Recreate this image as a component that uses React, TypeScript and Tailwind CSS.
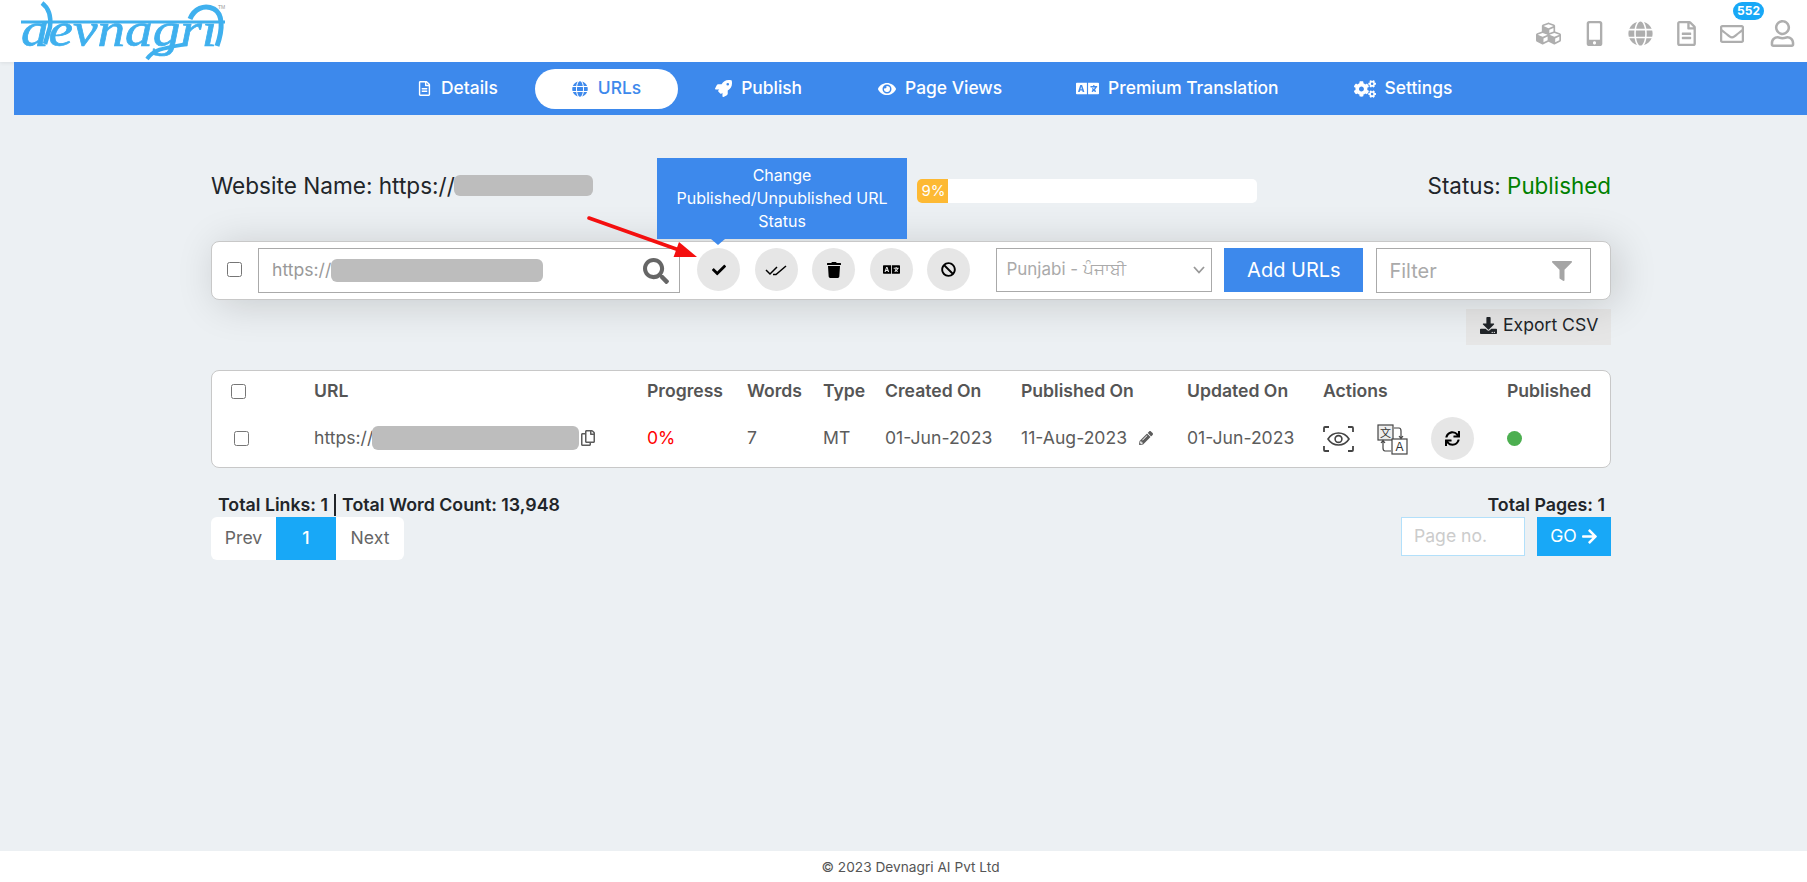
import {
  FaArrowRight,
  FaBan,
  FaCheck,
  FaCogs,
  FaCubes,
  FaDownload,
  FaEye,
  FaFilter,
  FaGlobe,
  FaLanguage,
  FaMobileAlt,
  FaPencilAlt,
  FaRegCopy,
  FaRegEnvelope,
  FaRegFileAlt,
  FaRegUser,
  FaRocket,
  FaSearch,
  FaSync,
  FaTrash,
} from 'react-icons/fa';
import type { ReactNode } from 'react';

const font = { fontFamily: 'Inter, "Noto Sans", sans-serif' };

function Logo() {
  return (
    <svg width="232" height="60" viewBox="0 0 232 60" className="ml-[18px] shrink-0">
      <clipPath id="below-line">
        <rect x="0" y="21" width="232" height="39" />
      </clipPath>
      <text
        x="3"
        y="45"
        fill="#3fb0ee"
        stroke="#3fb0ee"
        strokeWidth="0.7"
        clipPath="url(#below-line)"
        fontFamily="Liberation Serif"
        fontStyle="italic"
        fontSize="48"
        textLength="196"
        lengthAdjust="spacingAndGlyphs"
      >
        devnagri
      </text>
      <path d="M3 21 H207" stroke="#3fb0ee" strokeWidth="3" fill="none" />
      <path d="M24 2 C32 8 33 18 32 26 L27 43" stroke="#3fb0ee" strokeWidth="4.5" fill="none" />
      <path d="M129 58 C136 48 146 47 169 43" stroke="#3fb0ee" strokeWidth="4" fill="none" />
      <path d="M172 18 C176 8 186 3 196 8 C205 13 205 28 199 45" stroke="#3fb0ee" strokeWidth="5" fill="none" />
      <text x="200" y="8" fill="#999" fontSize="5" fontFamily="Liberation Sans">TM</text>
    </svg>
  );
}

function TopIcon({ children, className }: { children: ReactNode; className: string }) {
  return <div className={`flex w-[46px] justify-center text-[#aeaeae] ${className}`}>{children}</div>;
}

function NavItem({ icon, label, active, className }: { icon: ReactNode; label: string; active?: boolean; className?: string }) {
  return (
    <div
      className={
        active
          ? 'flex h-10 items-center gap-[10px] rounded-[20px] bg-white px-[37px] text-[#3d89ec]'
          : `flex h-10 items-center gap-[9px] px-[37px] text-white ${className ?? ''}`
      }
    >
      {icon}
      <span className="text-[17.4px] font-medium">{label}</span>
    </div>
  );
}

function RoundBtn({ children, className }: { children: ReactNode; className?: string }) {
  return (
    <div className={`flex h-[43px] w-[43px] shrink-0 items-center justify-center rounded-full bg-[#e6e6e6] text-black ${className ?? ''}`}>
      {children}
    </div>
  );
}

function Blob({ className }: { className: string }) {
  return <span className={`block rounded-[6px] bg-[#bdbdbd] ${className}`} />;
}

function DoubleCheck() {
  return (
    <svg width="22" height="12" viewBox="0 0 22 12" fill="none" stroke="black" strokeWidth="1.5">
      <path d="M1 6 L5 10 L12 3" />
      <path d="M8 10.5 L11 10.5 L21 2" />
    </svg>
  );
}

function ScanEye() {
  return (
    <svg width="31" height="26" viewBox="0 0 31 26" fill="none" stroke="#444" strokeWidth="1.6">
      <path d="M1 6 V2 Q1 1 2 1 H6 M25 1 H29 Q30 1 30 2 V6 M30 20 V24 Q30 25 29 25 H25 M6 25 H2 Q1 25 1 24 V20" strokeWidth="1.8" />
      <path d="M5 13 C10 5 21 5 26 13 C21 21 10 21 5 13 Z" />
      <circle cx="15.5" cy="13" r="3.4" />
    </svg>
  );
}

function TranslateIcon() {
  return (
    <svg width="31" height="31" viewBox="0 0 31 31" fill="none" stroke="#444" strokeWidth="1.2">
      <rect x="1" y="1" width="15" height="15" fill="#eee" />
      <text x="8.5" y="13" textAnchor="middle" fontSize="11" fill="#333" stroke="none" fontFamily='"Noto Sans CJK SC", sans-serif'>文</text>
      <rect x="15" y="15" width="15" height="15" fill="#fff" />
      <text x="22.5" y="27" textAnchor="middle" fontSize="12" fill="#333" stroke="none" fontFamily="Liberation Sans">A</text>
      <path d="M17 4 H22 Q24 4 24 7 V14 M22 12 L24 14.5 L26 12" />
      <path d="M14 27 H8 Q6 27 6 24 V17 M4 19 L6 16.5 L8 19" />
    </svg>
  );
}

export default function App() {
  return (
    <div className="flex min-h-[882px] flex-col bg-[#ecf0f3] text-[#212529]" style={font}>
      <header className="relative flex h-[62px] items-center justify-between bg-white shadow-[0_1px_4px_rgba(0,0,0,0.08)]">
        <Logo />
        <div className="relative mr-[2px] flex items-center pt-[5px]">
          <TopIcon className="text-[25px]"><FaCubes /></TopIcon>
          <TopIcon className="text-[25px]"><FaMobileAlt /></TopIcon>
          <TopIcon className="text-[25px]"><FaGlobe /></TopIcon>
          <TopIcon className="text-[25px]"><FaRegFileAlt /></TopIcon>
          <TopIcon className="text-[24px]"><FaRegEnvelope /></TopIcon>
          <TopIcon className="ml-[4px] text-[27px]"><FaRegUser /></TopIcon>
          <span className="absolute left-[208px] top-[-13px] flex h-[18px] w-[31px] items-center justify-center rounded-full bg-[#18a8f7] text-[12px] font-bold text-white">
            552
          </span>
        </div>
      </header>

      <nav className="relative ml-[14px] flex h-[53px] items-center bg-[#3d89ec] pl-[366px]">
        <NavItem icon={<FaRegFileAlt className="text-[15px]" />} label="Details" />
        <NavItem active icon={<FaGlobe className="text-[16px]" />} label="URLs" />
        <NavItem icon={<FaRocket className="text-[17px]" />} label="Publish" />
        <NavItem className="ml-[2px]" icon={<FaEye className="text-[18px]" />} label="Page Views" />
        <NavItem icon={<FaLanguage className="text-[23px]" />} label="Premium Translation" />
        <NavItem className="ml-[1px]" icon={<FaCogs className="text-[22px]" />} label="Settings" />
      </nav>

      <main className="ml-[211px] w-[1400px]">
        <div className="mt-[47px] flex h-[48px] items-center">
          <div className="flex w-[706px] items-center text-[22.6px]">
            <span>Website Name: https://</span>
            <Blob className="ml-[-1px] h-[21px] w-[139px]" />
          </div>
          <div className="mt-[10px] h-6 w-[340px] overflow-hidden rounded-[5px] bg-white">
            <div className="flex h-full w-[31px] items-center justify-center bg-[#fdb933] pl-[2px] text-[15px] text-white">9%</div>
          </div>
          <div className="ml-auto text-[22.4px]">
            Status: <span className="text-[#008000]">Published</span>
          </div>
        </div>

        <div className="relative mt-[31px] flex h-[59px] items-start rounded-[8px] border border-[#c8c8c8] bg-white pt-[6px] shadow-[6px_4px_40px_rgba(0,0,0,0.16)]">
          <div className="absolute left-[445px] top-[-84px] flex h-[81px] w-[250px] flex-col items-center justify-center bg-[#3d89ec] text-center text-[16px] leading-[23px] text-white">
            <span>Change</span>
            <span>Published/Unpublished URL</span>
            <span>Status</span>
            <span className="absolute left-[54px] top-[81px] h-0 w-0 border-x-[7px] border-t-[6px] border-x-transparent border-t-[#3d89ec]" />
          </div>
          <svg width="125" height="55" viewBox="0 0 125 55" className="absolute left-[375px] top-[-33px] z-10">
            <path d="M2 9 L92 41" stroke="#f40f0f" strokeWidth="3.6" strokeLinecap="round" />
            <path d="M110 48 L86.6 48 L92 33 Z" fill="#f40f0f" />
          </svg>

          <input type="checkbox" className="ml-[15px] mt-[14px] h-[15px] w-[15px]" readOnly />
          <div className="ml-[16px] flex h-[45px] w-[422px] items-center border border-[#aaa] pl-[13px] text-[17.6px] text-[#999]">
            <span>https://</span>
            <Blob className="h-[23px] w-[212px]" />
            <FaSearch className="ml-auto mr-[10px] text-[26px] text-[#666]" />
          </div>
          <RoundBtn className="ml-[17px]"><FaCheck className="text-[14px]" /></RoundBtn>
          <RoundBtn className="ml-[14.6px]"><DoubleCheck /></RoundBtn>
          <RoundBtn className="ml-[14.6px]"><FaTrash className="text-[16px]" /></RoundBtn>
          <RoundBtn className="ml-[14.6px]"><FaLanguage className="text-[17px]" /></RoundBtn>
          <RoundBtn className="ml-[14.6px]"><FaBan className="text-[15px]" /></RoundBtn>
          <div className="relative ml-[26px]">
            <select className="block h-[44px] w-[216px] appearance-none border border-[#aaa] bg-white pl-[9px] text-[17px] text-[#aaa]">
              <option>Punjabi - ਪੰਜਾਬੀ</option>
            </select>
            <svg width="12" height="8" viewBox="0 0 12 8" fill="none" stroke="#999" strokeWidth="1.8" className="absolute right-[7px] top-[18px]">
              <path d="M1 1 L6 6.5 L11 1" />
            </svg>
          </div>
          <div className="ml-[12px] flex h-[44px] w-[139px] items-center justify-center bg-[#3d89ec] text-[20px] text-white">
            Add URLs
          </div>
          <div className="ml-[13px] flex h-[45px] w-[215px] items-center justify-between border border-[#aaa] pl-[12px] pr-[18px] text-[20px] text-[#aaa]">
            <span>Filter</span>
            <FaFilter className="text-[20px] text-[#a5a5a5]" />
          </div>
        </div>

        <div className="mt-[9px] flex justify-end">
          <div className="flex h-[36px] w-[145px] items-center gap-[6px] bg-[#e6e6e6] pb-[3px] pl-[14px] text-[17.6px]">
            <FaDownload className="text-[17px]" />
            <span>Export CSV</span>
          </div>
        </div>

        <div className="mt-[25px] h-[98px] rounded-[8px] border border-[#c8c8c8] bg-white text-[17.6px] text-[#5c5c5c]">
          <div className="grid h-[39px] grid-cols-[102px_333px_100px_76px_62px_136px_166px_136px_184px_1fr] items-center pt-[2px] font-semibold text-[#555]">
            <span className="pl-[19px]"><input type="checkbox" className="block h-[15px] w-[15px]" readOnly /></span>
            <span>URL</span>
            <span>Progress</span>
            <span>Words</span>
            <span>Type</span>
            <span>Created On</span>
            <span>Published On</span>
            <span>Updated On</span>
            <span>Actions</span>
            <span>Published</span>
          </div>
          <div className="grid h-[57px] grid-cols-[102px_333px_100px_76px_62px_136px_166px_136px_184px_1fr] items-center">
            <span className="pl-[22px]"><input type="checkbox" className="block h-[15px] w-[15px]" readOnly /></span>
            <span className="flex items-center">
              https://
              <Blob className="ml-[-1px] h-[24px] w-[207px]" />
              <FaRegCopy className="ml-[1px] text-[16px]" />
            </span>
            <span className="text-[#f00]">0%</span>
            <span>7</span>
            <span>MT</span>
            <span>01-Jun-2023</span>
            <span className="flex items-center">
              11-Aug-2023
              <FaPencilAlt className="ml-[12px] text-[14px]" />
            </span>
            <span>01-Jun-2023</span>
            <span className="flex items-center">
              <ScanEye />
              <span className="ml-[23px] mt-[2px]"><TranslateIcon /></span>
              <RoundBtn className="ml-[23px]"><FaSync className="text-[15px]" /></RoundBtn>
            </span>
            <span className="block h-[15px] w-[15px] rounded-full bg-[#4caf50]" />
          </div>
        </div>

        <div className="mt-[27px] flex justify-between">
          <div>
            <div className="flex h-5 items-center pl-[7px] text-[17.8px] font-semibold leading-[20px]">
              Total Links: 1
              <span className="mx-[6px] h-[22px] w-[2px] shrink-0 bg-[#212529]" />
              Total Word Count: 13,948
            </div>
            <div className="mt-[2px] flex h-[43px] w-[193px] items-center overflow-hidden rounded-[6px] bg-white text-[17.6px] text-[#666]">
              <span className="w-[65px] text-center">Prev</span>
              <span className="flex h-full w-[60px] items-center justify-center bg-[#18a8f7] font-medium text-white">1</span>
              <span className="w-[68px] text-center">Next</span>
            </div>
          </div>
          <div className="flex flex-col items-end">
            <div className="pr-[6px] text-[17.8px] font-semibold leading-[20px]">Total Pages: 1</div>
            <div className="mt-[2px] flex h-[39px]">
              <input
                placeholder="Page no."
                className="w-[124px] border border-[#b3e0fa] bg-white pl-[12px] text-[17.6px] placeholder:text-[#ccc]"
              />
              <div className="ml-[12px] flex w-[74px] items-center justify-center gap-[4px] bg-[#18a8f7] text-[17.6px] text-white">
                GO <FaArrowRight className="text-[17px]" />
              </div>
            </div>
          </div>
        </div>
      </main>

      <footer className="mt-auto flex h-[31px] items-center justify-center bg-white pl-[14px] pt-[1px] text-[13.7px] text-[#555]">
        © 2023 Devnagri AI Pvt Ltd
      </footer>
    </div>
  );
}
